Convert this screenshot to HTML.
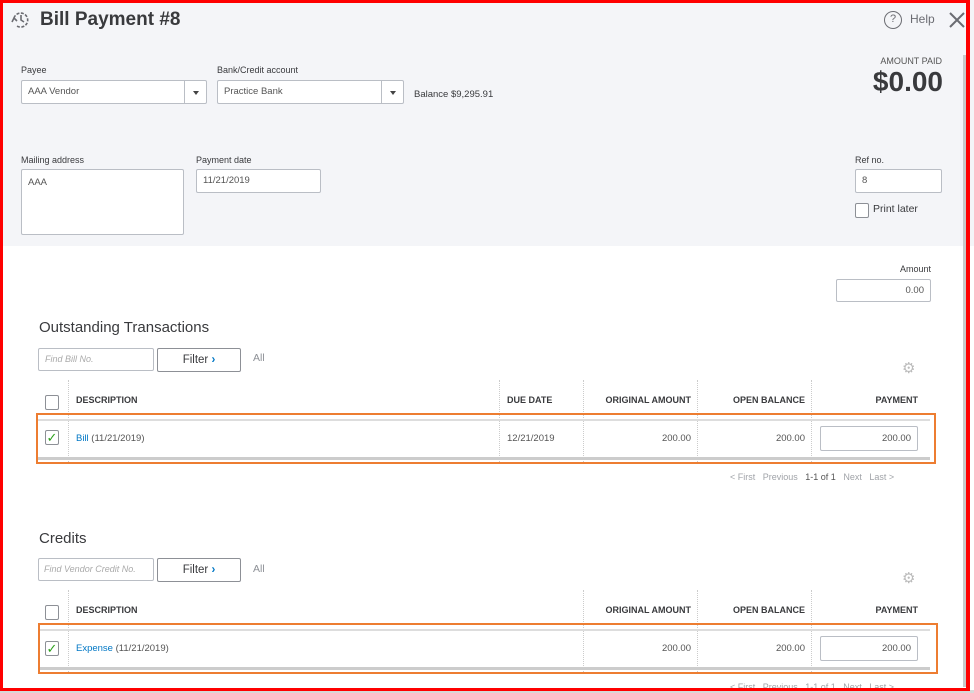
<!DOCTYPE html>
<html><head><meta charset="utf-8"><style>
*{box-sizing:border-box;margin:0;padding:0}
body{width:974px;height:693px;overflow:hidden;background:#fff;font-family:"Liberation Sans",Arial,sans-serif;color:#393a3d;position:relative}
.a{position:absolute}
.hdr{left:0;top:0;width:974px;height:246px;background:#f4f5f8}
.lbl{font-size:9px;color:#393a3d}
.inp{background:#fff;border:1px solid #babec5;border-radius:2px;font-size:9.5px;color:#555;padding-left:6px}
.dd{position:absolute;right:0;top:0;width:22px;height:100%;border-left:1px solid #babec5}
.dd:after{content:"";position:absolute;left:8px;top:10px;border:3.5px solid transparent;border-top:4px solid #444}
.h{font-size:9px;font-weight:bold;color:#393a3d}
.c{font-size:9.5px;color:#555}
.vl{width:0;border-left:1px dotted #ccc}
.cb{width:14px;height:15px;border:1px solid #8d9096;border-radius:2px;background:#fff}
.btn{background:#fff;border:1px solid #8d9096;border-radius:2px;font-size:11.5px;color:#393a3d;text-align:center}
.org{border:2px solid #ed7d31}
.pg{font-size:9px;color:#a0a3a8}
</style></head><body>
<div class="a hdr"></div>
<svg class="a" style="left:10px;top:10px" width="22" height="20" viewBox="0 0 22 20"><path d="M4 8 A7 7 0 1 1 7 16" fill="none" stroke="#6b6c72" stroke-width="1.6" stroke-dasharray="3 1.5"/><path d="M11 5 V10 L14 12" fill="none" stroke="#6b6c72" stroke-width="1.6"/><path d="M2 12 L4 8 L7 11" fill="none" stroke="#6b6c72" stroke-width="1.6"/></svg>
<div class="a" style="left:40px;top:9px;font-size:19px;font-weight:bold;color:#393a3d">Bill Payment #8</div>
<div class="a" style="left:884px;top:11px;width:18px;height:18px;border:1.5px solid #6b6c72;border-radius:50%;font-size:11px;text-align:center;line-height:15px;color:#6b6c72">?</div>
<div class="a" style="left:910px;top:12px;font-size:12px;color:#6b6c72">Help</div>
<svg class="a" style="left:948px;top:11px" width="18" height="18"><path d="M2 2 L16 16 M16 2 L2 16" stroke="#6b6c72" stroke-width="2"/></svg>
<div class="a lbl" style="left:21px;top:65px">Payee</div>
<div class="a inp" style="left:21px;top:80px;width:186px;height:24px;line-height:22px">AAA Vendor<span class="dd"></span></div>
<div class="a lbl" style="left:217px;top:65px">Bank/Credit account</div>
<div class="a inp" style="left:217px;top:80px;width:187px;height:24px;line-height:22px">Practice Bank<span class="dd"></span></div>
<div class="a" style="left:414px;top:89px;font-size:9.5px;color:#393a3d">Balance $9,295.91</div>
<div class="a" style="left:870px;top:56px;width:72px;text-align:right;font-size:9px;color:#555">AMOUNT PAID</div>
<div class="a" style="left:830px;top:66px;width:113px;text-align:right;font-size:28px;font-weight:bold;color:#393a3d">$0.00</div>
<div class="a lbl" style="left:21px;top:155px">Mailing address</div>
<div class="a inp" style="left:21px;top:169px;width:163px;height:66px;padding-top:7px">AAA</div>
<div class="a lbl" style="left:196px;top:155px">Payment date</div>
<div class="a inp" style="left:196px;top:169px;width:125px;height:24px;line-height:22px">11/21/2019</div>
<div class="a lbl" style="left:855px;top:155px">Ref no.</div>
<div class="a inp" style="left:855px;top:169px;width:87px;height:24px;line-height:22px">8</div>
<div class="a cb" style="left:855px;top:203px"></div>
<div class="a" style="left:873px;top:203px;font-size:10.5px;color:#393a3d">Print later</div>
<div class="a" style="left:963px;top:55px;width:4px;height:632px;background:#c8c8c8"></div>
<div class="a lbl" style="left:880px;top:264px;width:51px;text-align:right">Amount</div>
<div class="a inp" style="left:836px;top:279px;width:95px;height:23px;line-height:21px;text-align:right;padding-right:6px">0.00</div>

<div class="a" style="left:39px;top:319px;font-size:15px;color:#393a3d">Outstanding Transactions</div>
<div class="a inp" style="left:38px;top:348px;width:116px;height:23px;line-height:21px;font-style:italic;color:#aaa;font-size:9px">Find Bill No.</div>
<div class="a btn" style="left:157px;top:348px;width:84px;height:24px;line-height:22px">Filter <span style="color:#0077c5;font-weight:bold">›</span></div>
<div class="a" style="left:253px;top:352px;font-size:10.5px;color:#8d9096">All</div>
<div class="a" style="left:902px;top:359px;font-size:15px;color:#bbb">⚙</div>
<div class="a cb" style="left:45px;top:395px"></div>
<div class="a vl" style="left:68px;top:380px;height:82px"></div>
<div class="a h" style="left:76px;top:395px">DESCRIPTION</div>
<div class="a vl" style="left:499px;top:380px;height:82px"></div>
<div class="a h" style="left:507px;top:395px">DUE DATE</div>
<div class="a vl" style="left:583px;top:380px;height:82px"></div>
<div class="a h" style="left:590px;top:395px;width:101px;text-align:right">ORIGINAL AMOUNT</div>
<div class="a vl" style="left:697px;top:380px;height:82px"></div>
<div class="a h" style="left:700px;top:395px;width:105px;text-align:right">OPEN BALANCE</div>
<div class="a vl" style="left:811px;top:380px;height:82px"></div>
<div class="a h" style="left:820px;top:395px;width:98px;text-align:right">PAYMENT</div>
<div class="a" style="left:38px;top:419px;width:892px;height:2px;background:#ddd"></div>
<div class="a" style="left:38px;top:457px;width:892px;height:3px;background:#ccc"></div>
<div class="a org" style="left:36px;top:413px;width:900px;height:51px"></div>
<div class="a cb" style="left:45px;top:430px;color:#2ca01c;font-size:13px;line-height:13px;text-align:center">✓</div>
<div class="a c" style="left:76px;top:433px"><span style="color:#0077c5">Bill</span> (11/21/2019)</div>
<div class="a c" style="left:507px;top:433px">12/21/2019</div>
<div class="a c" style="left:590px;top:433px;width:101px;text-align:right">200.00</div>
<div class="a c" style="left:700px;top:433px;width:105px;text-align:right">200.00</div>
<div class="a inp" style="left:820px;top:426px;width:98px;height:25px;line-height:23px;text-align:right;padding-right:6px">200.00</div>
<div class="a pg" style="left:730px;top:472px">&lt; First&nbsp;&nbsp; Previous&nbsp;&nbsp; <span style="color:#555">1-1 of 1</span>&nbsp;&nbsp; Next&nbsp;&nbsp; Last &gt;</div>

<div class="a" style="left:39px;top:530px;font-size:15px;color:#393a3d">Credits</div>
<div class="a inp" style="left:38px;top:558px;width:116px;height:23px;line-height:21px;font-style:italic;color:#aaa;font-size:9px;padding-left:5px">Find Vendor Credit No.</div>
<div class="a btn" style="left:157px;top:558px;width:84px;height:24px;line-height:22px">Filter <span style="color:#0077c5;font-weight:bold">›</span></div>
<div class="a" style="left:253px;top:563px;font-size:10.5px;color:#8d9096">All</div>
<div class="a" style="left:902px;top:569px;font-size:15px;color:#bbb">⚙</div>
<div class="a cb" style="left:45px;top:605px"></div>
<div class="a vl" style="left:68px;top:590px;height:82px"></div>
<div class="a h" style="left:76px;top:605px">DESCRIPTION</div>
<div class="a vl" style="left:583px;top:590px;height:82px"></div>
<div class="a h" style="left:590px;top:605px;width:101px;text-align:right">ORIGINAL AMOUNT</div>
<div class="a vl" style="left:697px;top:590px;height:82px"></div>
<div class="a h" style="left:700px;top:605px;width:105px;text-align:right">OPEN BALANCE</div>
<div class="a vl" style="left:811px;top:590px;height:82px"></div>
<div class="a h" style="left:820px;top:605px;width:98px;text-align:right">PAYMENT</div>
<div class="a" style="left:38px;top:629px;width:892px;height:2px;background:#ddd"></div>
<div class="a" style="left:38px;top:667px;width:892px;height:3px;background:#ccc"></div>
<div class="a org" style="left:38px;top:623px;width:900px;height:51px"></div>
<div class="a cb" style="left:45px;top:641px;color:#2ca01c;font-size:13px;line-height:13px;text-align:center">✓</div>
<div class="a c" style="left:76px;top:643px"><span style="color:#0077c5">Expense</span> (11/21/2019)</div>
<div class="a c" style="left:590px;top:643px;width:101px;text-align:right">200.00</div>
<div class="a c" style="left:700px;top:643px;width:105px;text-align:right">200.00</div>
<div class="a inp" style="left:820px;top:636px;width:98px;height:25px;line-height:23px;text-align:right;padding-right:6px">200.00</div>
<div class="a pg" style="left:730px;top:682px">&lt; First&nbsp;&nbsp; Previous&nbsp;&nbsp; 1-1 of 1&nbsp;&nbsp; Next&nbsp;&nbsp; Last &gt;</div>

<div class="a" style="left:0;top:690px;width:974px;height:3px;background:#d8d8d8"></div>
<div class="a" style="left:0;top:0;width:970px;height:691px;border:3px solid #ff0000;border-right-width:4px"></div>
</body></html>
